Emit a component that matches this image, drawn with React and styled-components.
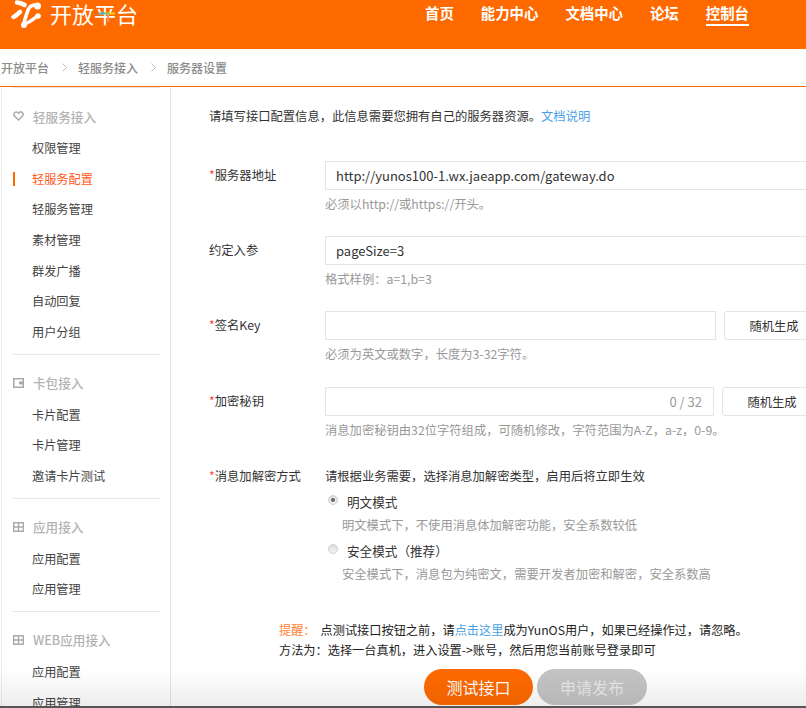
import React from 'react';
import styled, { createGlobalStyle } from 'styled-components';

const GlobalStyle = createGlobalStyle`
  html, body {
    margin: 0;
    padding: 0;
    height: 100%;
    overflow: hidden;
    background: #fff;
    font-family: "Noto Sans CJK SC", "Noto Sans", sans-serif;
    color: #333;
  }
`;

const Page = styled.div`
  position: relative;
  width: 806px;
  height: 708px;
  overflow: hidden;
  &::after {
    content: '';
    position: absolute;
    left: 0;
    right: 0;
    bottom: 0;
    height: 38px;
    background: linear-gradient(rgba(0, 0, 0, 0), rgba(0, 0, 0, 0.07));
    border-bottom: 2px solid #555;
    pointer-events: none;
  }
`;

const Header = styled.header`
  display: flex;
  height: 49px;
  background: #ff6a00;
  color: #fff;
  white-space: nowrap;
`;

const Logo = styled.div`
  position: relative;
  display: flex;
  align-items: flex-start;
  width: 425px;
  flex: none;
  padding-left: 9px;
  box-sizing: border-box;
`;

const LogoName = styled.span`
  margin: -3px 0 0 7px;
  font-size: 22px;
  line-height: 32px;
  letter-spacing: 0;
`;

const LogoCross = styled.svg`
  position: absolute;
  left: 99px;
  top: 11px;
`;

const Nav = styled.nav`
  display: flex;
  gap: 27px;
  padding-top: 3px;
`;

const NavItem = styled.a`
  height: 21px;
  font-size: 14.4px;
  font-weight: 700;
  line-height: 20px;
  border-bottom: ${(p) => (p.$active ? '2px solid #fff' : 'none')};
`;

const Crumbs = styled.div`
  display: flex;
  align-items: center;
  height: 37px;
  padding-left: 1px;
  border-bottom: 1px solid #ff6a00;
  box-sizing: content-box;
  font-size: 12px;
  color: #8c8c8c;
  font-weight: 500;
`;

const CrumbArrow = styled.svg`
  margin: 0 11px 0 13px;
`;

const Body = styled.div`
  display: flex;
`;

const Side = styled.aside`
  flex: none;
  width: 170px;
  margin-left: 1px;
  height: 640px;
  padding: 0 10px 0 11px;
  box-sizing: border-box;
  border-left: 1px solid #ececec;
  border-right: 1px solid #e6e6e6;
`;

const SideGroup = styled.div`
  padding: 12px 0 ${(p) => (p.$last ? '0' : '6px')};
  border-top: 1px solid #e8e8e8;
  margin-bottom: 0;
`;

const GroupTitle = styled.div`
  display: flex;
  align-items: center;
  height: 30px;
  margin: 1px 0 2px;
  font-size: 12.6px;
  color: #b3b3b3;
  font-weight: 500;
  svg {
    margin-right: 9px;
    flex: none;
  }
`;

const SideLink = styled.a`
  position: relative;
  display: block;
  height: 30.67px;
  line-height: 30.67px;
  padding-left: 19px;
  font-size: 12.2px;
  color: ${(p) => (p.$active ? '#ff5a1e' : '#444')};
  &::before {
    content: ${(p) => (p.$active ? "''" : 'none')};
    position: absolute;
    left: 0;
    top: 8px;
    width: 2px;
    height: 14px;
    background: #ff6a00;
  }
`;

const Main = styled.main`
  flex: none;
  width: 640px;
  padding: 19px 0 0 38px;
  box-sizing: border-box;
  font-size: 12.3px;
  white-space: nowrap;
`;

const Intro = styled.p`
  margin: 0 0 35px;
  line-height: 20px;
  a {
    color: #4a9fe6;
  }
`;

const Field = styled.div`
  display: grid;
  grid-template-columns: 116px 1fr;
  margin-bottom: ${(p) => p.$gap || 22}px;
`;

const Label = styled.label`
  line-height: 29px;
  color: #333;
  i {
    color: #f33;
    font-style: normal;
  }
`;

const Row = styled.div`
  display: flex;
`;

const Input = styled.div`
  display: flex;
  align-items: center;
  justify-content: space-between;
  flex: none;
  width: ${(p) => p.$w}px;
  height: 29px;
  padding: 0 10px;
  box-sizing: border-box;
  border: 1px solid #e4e4e4;
  font-size: 13px;
  color: #333;
`;

const Count = styled.span`
  margin-left: auto;
  padding-right: 1px;
  color: #999;
`;

const RandomButton = styled.button`
  flex: none;
  width: 100px;
  height: 29px;
  margin-left: ${(p) => p.$gap}px;
  padding: 0;
  background: #fff;
  border: 1px solid #e4e4e4;
  border-radius: 3px;
  font: inherit;
  color: #333;
`;

const Hint = styled.div`
  margin-top: 4px;
  line-height: 20px;
  color: #999;
`;

const ModeText = styled.div`
  line-height: 20px;
  margin-top: 4px;
`;

const ModeRow = styled.div`
  display: flex;
  align-items: center;
  height: 20px;
  margin: ${(p) => p.$top}px 0 0 3px;
  font-size: 12.6px;
`;

const Radio = styled.span`
  position: relative;
  flex: none;
  width: 10px;
  height: 10px;
  margin: 0 9px 2px 0;
  border-radius: 50%;
  background: linear-gradient(#dcdcdc, #f4f4f4);
  border: 1px solid #cfcfcf;
  box-sizing: border-box;
  &::after {
    content: ${(p) => (p.$on ? "''" : 'none')};
    position: absolute;
    inset: 2px;
    border-radius: 50%;
    background: #666;
  }
`;

const ModeHint = styled.div`
  margin: 4px 0 0 17px;
  line-height: 20px;
  color: #999;
`;

const Notice = styled.div`
  margin: 0 0 0 70px;
  line-height: 20px;
  font-size: 12.2px;
  color: #222;
  b {
    font-weight: 400;
    color: #ff8133;
    margin-right: 5px;
  }
  a {
    color: #4a9fe6;
  }
`;

const Actions = styled.div`
  display: flex;
  gap: 4px;
  margin: 9px 0 0 215px;
`;

const Action = styled.button`
  width: ${(p) => p.$w}px;
  height: 36px;
  padding: 0;
  border: 0;
  border-radius: 18px;
  background: ${(p) => (p.$muted ? '#c4c4c4' : '#ff6a00')};
  color: ${(p) => (p.$muted ? '#e8e8e8' : '#fff')};
  font: inherit;
  font-size: 16px;
`;

const HeartIcon = () => (
  <svg width="11" height="10" viewBox="0 0 11 10" fill="none" stroke="#b0b0b0" strokeWidth="1.6">
    <path d="M5.5 9 1.6 5.1a2.4 2.4 0 0 1 3.4-3.4l.5.5.5-.5a2.4 2.4 0 0 1 3.4 3.4z" />
  </svg>
);

const CardIcon = () => (
  <svg width="11" height="10" viewBox="0 0 11 10" fill="none">
    <path d="M.8.8h9.4v8.4H.8z" stroke="#aaa" strokeWidth="1.6" />
    <path d="M6 3.4h4.5v3H6z" fill="#aaa" />
  </svg>
);

const GridIcon = () => (
  <svg width="11" height="10" viewBox="0 0 11 10" fill="none" stroke="#aaa" strokeWidth="1.4">
    <path d="M.7.7h9.6v8.6H.7zM5.5.7v8.6M.7 5h9.6" />
  </svg>
);

const Arrow = () => (
  <CrumbArrow width="5" height="9" viewBox="0 0 5 9" fill="none" stroke="#c4c4c4">
    <path d="m.5.5 4 4-4 4" />
  </CrumbArrow>
);

const groups = [
  { title: '轻服务接入', icon: <HeartIcon />, links: ['权限管理', '轻服务配置', '轻服务管理', '素材管理', '群发广播', '自动回复', '用户分组'] },
  { title: '卡包接入', icon: <CardIcon />, links: ['卡片配置', '卡片管理', '邀请卡片测试'] },
  { title: '应用接入', icon: <GridIcon />, links: ['应用配置', '应用管理'] },
  { title: 'WEB应用接入', icon: <GridIcon />, links: ['应用配置', '应用管理'] },
];

export default function App() {
  return (
    <Page>
      <GlobalStyle />
      <Header>
        <Logo>
          <svg width="34" height="29" viewBox="0 0 34 29" fill="none" stroke="#fff" strokeLinecap="round">
            <path d="M8 2.5c3 .2 5 1 7.5 2.5" strokeWidth="4.5" />
            <path d="M25.5 5c-4 .5-6 3-7 6.5-.8 3-2.500 6-3.500 12" strokeWidth="3.6" />
            <path d="M4.500 17c2.500-1 4-3 6.500-5" strokeWidth="4.500" />
            <path d="M15 24c5-1 8-4 12-7" strokeWidth="3.4" />
            <circle cx="28.500" cy="6" r="3.500" fill="#fff" stroke="none" />
            <circle cx="15" cy="25" r="3" fill="#fff" stroke="none" />
            <circle cx="29" cy="16" r="2.800" fill="#fff" stroke="none" />
          </svg>
          <LogoName>开放平台</LogoName>
          <LogoCross width="17" height="12" viewBox="0 0 17 12">
            <path d="M0 1.500h6v2H0z" fill="#2fc4e0" />
            <path d="M6 1.500h5v2H6z" fill="#8fcf3a" />
            <path d="M11 1.500h5v2h-5z" fill="#ffd21e" />
            <path d="M8 3.500h2V11H8z" fill="#ff8f7a" />
          </LogoCross>
        </Logo>
        <Nav>
          <NavItem>首页</NavItem>
          <NavItem>能力中心</NavItem>
          <NavItem>文档中心</NavItem>
          <NavItem>论坛</NavItem>
          <NavItem $active>控制台</NavItem>
        </Nav>
      </Header>
      <Crumbs>
        开放平台<Arrow />轻服务接入<Arrow />服务器设置
      </Crumbs>
      <Body>
        <Side>
          {groups.map((g, i) => (
            <SideGroup key={g.title} $last={i === groups.length - 1}>
              <GroupTitle>
                {g.icon}
                {g.title}
              </GroupTitle>
              {g.links.map((l) => (
                <SideLink key={l} $active={l === '轻服务配置'}>
                  {l}
                </SideLink>
              ))}
            </SideGroup>
          ))}
        </Side>
        <Main>
          <Intro>
            请填写接口配置信息，此信息需要您拥有自己的服务器资源。<a>文档说明</a>
          </Intro>
          <Field>
            <Label><i>*</i>服务器地址</Label>
            <div>
              <Input $w={520}>http://yunos100-1.wx.jaeapp.com/gateway.do</Input>
              <Hint>必须以http://或https://开头。</Hint>
            </div>
          </Field>
          <Field>
            <Label>约定入参</Label>
            <div>
              <Input $w={520}>pageSize=3</Input>
              <Hint>格式样例：a=1,b=3</Hint>
            </div>
          </Field>
          <Field $gap={23}>
            <Label><i>*</i>签名Key</Label>
            <div>
              <Row>
                <Input $w={391} />
                <RandomButton $gap={8}>随机生成</RandomButton>
              </Row>
              <Hint>必须为英文或数字，长度为3-32字符。</Hint>
            </div>
          </Field>
          <Field $gap={22}>
            <Label><i>*</i>加密秘钥</Label>
            <div>
              <Row>
                <Input $w={389}><Count>0 / 32</Count></Input>
                <RandomButton $gap={8}>随机生成</RandomButton>
              </Row>
              <Hint>消息加密秘钥由32位字符组成，可随机修改，字符范围为A-Z，a-z，0-9。</Hint>
            </div>
          </Field>
          <Field $gap={36}>
            <Label>
              <i>*</i>消息加解密方式
            </Label>
            <div>
              <ModeText>请根据业务需要，选择消息加解密类型，启用后将立即生效</ModeText>
              <ModeRow $top={5}><Radio $on />明文模式</ModeRow>
              <ModeHint>明文模式下，不使用消息体加解密功能，安全系数较低</ModeHint>
              <ModeRow $top={5}><Radio />安全模式（推荐）</ModeRow>
              <ModeHint>安全模式下，消息包为纯密文，需要开发者加密和解密，安全系数高</ModeHint>
            </div>
          </Field>
          <Notice>
            <b>提醒：</b>点测试接口按钮之前，请<a>点击这里</a>成为YunOS用户，如果已经操作过，请忽略。
            <br />
            方法为：选择一台真机，进入设置-&gt;账号，然后用您当前账号登录即可
          </Notice>
          <Actions>
            <Action $w={109}>测试接口</Action>
            <Action $w={110} $muted>申请发布</Action>
          </Actions>
        </Main>
      </Body>
    </Page>
  );
}
